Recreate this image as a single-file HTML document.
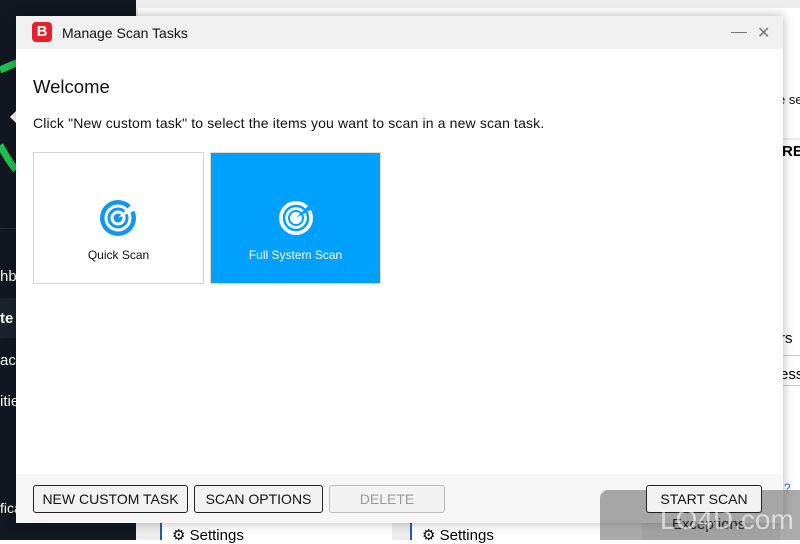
<!DOCTYPE html>
<html><head><style>
body{margin:0;width:800px;height:540px;overflow:hidden;position:relative;font-family:"Liberation Sans",sans-serif;background:#fff}
.abs{position:absolute;white-space:nowrap}
.btn{position:absolute;top:485px;height:28px;border:1.5px solid #222;border-radius:3px;background:#f2f2f2;box-sizing:border-box;font-size:14px;color:#111;text-align:center;line-height:26px}
</style></head><body>
<div class="abs" style="left:0;top:0;width:136px;height:540px;background:#121821"></div>
<div class="abs" style="left:0;top:228px;width:136px;height:1px;background:#2a303a"></div>
<div class="abs" style="left:0;top:298px;width:136px;height:40px;background:#1c232d"></div>
<svg class="abs" style="left:0;top:40px" width="30" height="150"><path d="M0 30 Q18 22 30 18" stroke="#1fbf4f" stroke-width="7" fill="none"/><path d="M0 105 Q8 120 16 130" stroke="#1fbf4f" stroke-width="7" fill="none"/><path d="M10 77 L16 71 L16 83Z" fill="#fff"/></svg>
<div class="abs" style="left:0;top:268px;color:#fff;font-size:15px">hb</div>
<div class="abs" style="left:0;top:310px;color:#fff;font-size:15px;font-weight:bold">te</div>
<div class="abs" style="left:0;top:352px;color:#fff;font-size:15px">acy</div>
<div class="abs" style="left:0;top:393px;color:#fff;font-size:15px">itie</div>
<div class="abs" style="left:0;top:500px;color:#fff;font-size:14px">fica</div>
<div class="abs" style="left:136px;top:0;width:664px;height:540px;background:#ececec"></div>
<div class="abs" style="left:138px;top:8px;width:662px;height:130px;background:#fff"></div>
<div class="abs" style="left:778px;top:92px;font-size:13px;color:#111">e se</div>
<div class="abs" style="left:780px;top:140px;width:20px;height:400px;background:#fff"></div>
<div class="abs" style="left:782px;top:143px;font-size:15px;font-weight:bold">RE</div>
<div class="abs" style="left:780px;top:330px;font-size:15px">rs</div>
<div class="abs" style="left:780px;top:366px;font-size:15px">ess</div>
<div class="abs" style="left:780px;top:355px;width:20px;height:1px;background:#ccc"></div>
<div class="abs" style="left:780px;top:385px;width:20px;height:1px;background:#ccc"></div>
<div class="abs" style="left:160px;top:520px;width:230px;height:20px;background:#fff;border-left:2px solid #2255cc"></div>
<div class="abs" style="left:172px;top:526px;font-size:15px">⚙ Settings</div>
<div class="abs" style="left:410px;top:520px;width:230px;height:20px;background:#fff;border-left:2px solid #2255cc"></div>
<div class="abs" style="left:422px;top:526px;font-size:15px">⚙ Settings</div>
<div class="abs" style="left:16px;top:16px;width:767px;height:507px;background:#fff;box-shadow:0 0 10px rgba(0,0,0,.3)"></div>
<div class="abs" style="left:16px;top:16px;width:767px;height:33px;background:#f0f0f0"></div>
<div class="abs" style="left:32px;top:22px;width:20px;height:20px;background:#e8202a;border-radius:4px;color:#fff;font-weight:bold;font-size:15px;text-align:center;line-height:20px">B</div>
<div class="abs" style="left:62px;top:25px;font-size:14px;color:#111">Manage Scan Tasks</div>
<div class="abs" style="left:731px;top:32px;width:16px;height:1px;background:#777"></div>
<div class="abs" style="left:757px;top:23px;font-size:16px;color:#777">✕</div>
<div class="abs" style="left:33px;top:76px;font-size:18.5px;color:#111">Welcome</div>
<div class="abs" style="left:33px;top:115px;font-size:14px;letter-spacing:0.15px;color:#111">Click "New custom task" to select the items you want to scan in a new scan task.</div>
<div class="abs" style="left:33px;top:152px;width:171px;height:132px;border:1px solid #d4d4d4;box-sizing:border-box;background:#fff"></div>
<svg class="abs" style="left:100px;top:200px" width="36" height="36"><circle cx="18" cy="18" r="18" fill="#1197f0"/><circle cx="18" cy="18" r="12" fill="none" stroke="#fff" stroke-width="3"/><circle cx="18" cy="18" r="6" fill="none" stroke="#fff" stroke-width="3"/><path d="M18 18 L36 0 L36 10Z" fill="#fff"/></svg>
<div class="abs" style="left:33px;top:248px;width:171px;text-align:center;font-size:12px;color:#111">Quick Scan</div>
<div class="abs" style="left:210px;top:152px;width:171px;height:132px;background:#00a0ff;border:1px solid #e8d8c8;box-sizing:border-box"></div>
<svg class="abs" style="left:278px;top:200px" width="36" height="36"><circle cx="18" cy="18" r="17" fill="#fff"/><circle cx="18" cy="18" r="12" fill="none" stroke="#00a0ff" stroke-width="2.5"/><circle cx="18" cy="18" r="7" fill="none" stroke="#00a0ff" stroke-width="2"/><path d="M18 18 L36 0 L36 8Z" fill="#00a0ff"/></svg>
<div class="abs" style="left:210px;top:248px;width:171px;text-align:center;font-size:12px;color:#fff">Full System Scan</div>
<div class="abs" style="left:16px;top:474px;width:767px;height:49px;background:#f6f6f6"></div>
<div class="btn" style="left:33px;width:155px">NEW CUSTOM TASK</div>
<div class="btn" style="left:194px;width:129px">SCAN OPTIONS</div>
<div class="btn" style="left:329px;width:116px;border-color:#bbb;color:#999">DELETE</div>
<div class="abs" style="left:600px;top:490px;width:200px;height:50px;background:rgba(100,100,100,.55);border-radius:8px 0 0 0"></div>
<div class="btn" style="left:646px;width:116px">START SCAN</div>
<div class="abs" style="left:672px;top:516px;font-size:15px;color:#222">Exceptions</div>
<div class="abs" style="left:660px;top:504px;font-size:28px;color:rgba(255,255,255,.6)">LO4D.com</div>
<div class="abs" style="left:784px;top:481px;font-size:12px;color:#1a73e8">?</div>
</body></html>
